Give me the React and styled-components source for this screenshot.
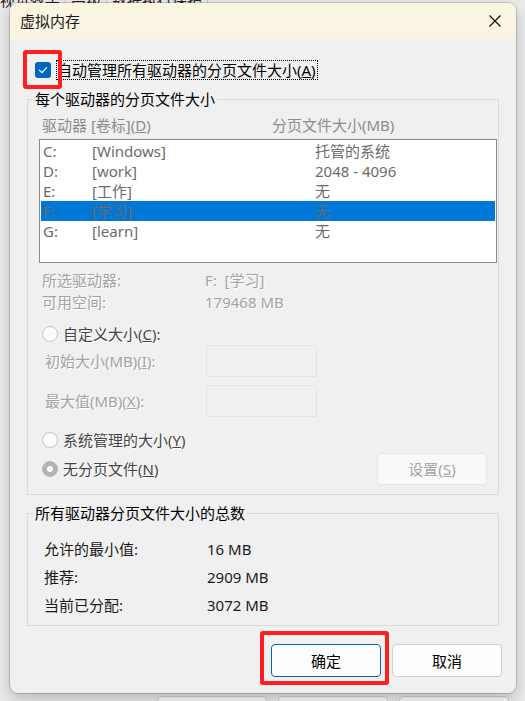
import React from "react";
import styled, { createGlobalStyle } from "styled-components";

const GlobalStyle = createGlobalStyle`
  html, body {
    margin: 0;
    padding: 0;
  }
  body {
    width: 525px;
    height: 701px;
    overflow: hidden;
    background: #ebebeb;
    font-family: "Noto Sans", "Noto Sans CJK SC", sans-serif;
    font-size: 15px;
    color: #000;
  }
`;

const Backdrop = styled.div`
  position: relative;
  width: 525px;
  height: 701px;
  overflow: hidden;
  display: flex;
  flex-direction: column;
  justify-content: space-between;
`;

const BackTabs = styled.div`
  display: flex;
  align-items: flex-end;
  height: 10px;
  margin-left: -5px;
  overflow: hidden;
  color: #222;
`;

const BackTab = styled.div`
  line-height: 20px;
  padding: 0 5px;
  border-right: 1px solid #c9c9c9;
`;

const BackFooter = styled.div`
  display: flex;
  justify-content: flex-end;
  align-items: flex-start;
  gap: 11px;
  height: 5px;
  padding-right: 16px;
  overflow: hidden;
`;

const BackButton = styled.div`
  width: 110px;
  height: 32px;
  box-sizing: border-box;
  border: 1px solid #cdcdcd;
  border-radius: 4px;
  background: #fbfbfb;
`;

const Dialog = styled.div`
  position: absolute;
  left: 10px;
  top: 3px;
  width: 506px;
  height: 690px;
  background: #f0f0f0;
  border-radius: 8px;
  box-shadow: 0 0 0 1px rgba(0, 0, 0, 0.16), 0 6px 16px rgba(0, 0, 0, 0.22);
  overflow: hidden;
  display: flex;
  flex-direction: column;
`;

const TitleBar = styled.div`
  height: 36px;
  flex-shrink: 0;
  background: #faf4e2;
  display: flex;
  align-items: center;
  justify-content: space-between;
  padding: 0 15px 0 10px;
  line-height: 20px;
  color: #1a1a1a;
`;

const Body = styled.div`
  padding: 21px 17px 0;
  display: flex;
  flex-direction: column;
`;

const CheckRow = styled.div`
  display: flex;
  align-items: center;
  gap: 5px;
  height: 20px;
  padding-left: 8px;
`;

const CheckBox = styled.span`
  position: relative;
  width: 16px;
  height: 16px;
  border-radius: 3px;
  background: #0067c0;
  display: flex;
  align-items: center;
  justify-content: center;
`;

const Highlight = styled.span`
  position: absolute;
  top: ${(p) => p.$t}px;
  left: ${(p) => p.$l}px;
  right: ${(p) => p.$r}px;
  bottom: ${(p) => p.$b}px;
  border: 4px solid #ff1f1f;
  border-radius: 3px;
  pointer-events: none;
`;

const FocusLabel = styled.span`
  box-sizing: border-box;
  height: 20px;
  line-height: 18px;
  border: 1px dotted #000;
  padding-right: 1px;
`;

const Group = styled.fieldset`
  margin: ${(p) => p.$top}px 0 0;
  padding: 0;
  border: 1px solid #dadada;
  min-width: 0;
`;

const GroupContent = styled.div`
  display: flex;
  flex-direction: column;
  padding: ${(p) => p.$pad};
`;

const Legend = styled.legend`
  margin-left: 5px;
  padding: 0 2px;
  line-height: 20px;
  color: #000;
`;

const ColumnHeader = styled.div`
  margin-top: 6px;
  display: grid;
  grid-template-columns: 230px 1fr;
  padding-left: 3px;
  line-height: 20px;
  color: #8c8c8c;
`;

const List = styled.div`
  margin-top: 4px;
  height: 124px;
  box-sizing: border-box;
  border: 1px solid #8b8b8b;
  background: #fff;
  padding: 1px;
`;

const ListRow = styled.div`
  display: grid;
  grid-template-columns: 49px 223px 1fr;
  padding-left: 2px;
  line-height: 20px;
  height: 20px;
  color: #6b6b6b;
  background: ${(p) => (p.$selected ? "#0078d7" : "transparent")};
`;

const Info = styled.div`
  margin-top: 6px;
`;

const InfoRow = styled.div`
  display: grid;
  grid-template-columns: 163px 1fr;
  padding-left: 3px;
  line-height: 22px;
  height: 22px;
`;

const Dim = styled.span`
  color: #a3a3a3;
  text-shadow: 1px 1px 0 #ffffff;
`;

const RadioRow = styled.div`
  margin-top: ${(p) => p.$top}px;
  display: flex;
  align-items: center;
  justify-content: space-between;
  height: ${(p) => (p.$tall ? 32 : 20)}px;
  padding: 0 10px 0 3px;
`;

const RadioLabel = styled.label`
  display: flex;
  align-items: center;
  gap: 5px;
  line-height: 20px;
  color: #454545;
  text-shadow: 1px 1px 0 #ffffff;
`;

const Radio = styled.span`
  width: 16px;
  height: 16px;
  box-sizing: border-box;
  border-radius: 50%;
  border: 1px solid ${(p) => (p.$checked ? "#b3b3b3" : "#c4c4c4")};
  background: ${(p) => (p.$checked ? "#b3b3b3" : "#fbfbfb")};
  display: flex;
  align-items: center;
  justify-content: center;
  &::after {
    content: "";
    display: ${(p) => (p.$checked ? "block" : "none")};
    width: 6px;
    height: 6px;
    border-radius: 50%;
    background: #fff;
  }
`;

const InputRow = styled.div`
  margin-top: ${(p) => p.$top}px;
  display: grid;
  grid-template-columns: 161px 111px;
  align-items: center;
  height: 32px;
  padding-left: 6px;
  line-height: 20px;
`;

const SizeInput = styled.div`
  height: 32px;
  box-sizing: border-box;
  border: 1px solid #e3e3e3;
  background: #f0f0f0;
`;

const SetButton = styled.div`
  width: 110px;
  height: 32px;
  box-sizing: border-box;
  border: 1px solid #e6e6e6;
  border-radius: 4px;
  background: #f9f9f9;
  display: flex;
  align-items: center;
  justify-content: center;
  line-height: 20px;
`;

const TotalRow = styled.div`
  display: grid;
  grid-template-columns: 163px 1fr;
  height: 28px;
  line-height: 28px;
  color: #1a1a1a;
`;

const Footer = styled.div`
  margin-top: 18px;
  display: flex;
  justify-content: flex-end;
  gap: 11px;
  padding-right: 14px;
`;

const DialogButton = styled.div`
  position: relative;
  width: 110px;
  height: 33px;
  box-sizing: border-box;
  border: 1px solid ${(p) => (p.$primary ? "#0067c0" : "#d0d0d0")};
  border-radius: 4px;
  background: #fdfdfd;
  display: flex;
  align-items: center;
  justify-content: center;
  line-height: 20px;
  color: #000;
`;

const drives = [
  { letter: "C:", label: "[Windows]", size: "托管的系统" },
  { letter: "D:", label: "[work]", size: "2048 - 4096" },
  { letter: "E:", label: "[工作]", size: "无" },
  { letter: "F:", label: "[学习]", size: "无", selected: true },
  { letter: "G:", label: "[learn]", size: "无" },
];

const totals = [
  ["允许的最小值:", "16 MB"],
  ["推荐:", "2909 MB"],
  ["当前已分配:", "3072 MB"],
];

function CloseIcon() {
  return (
    <svg width="12" height="12" viewBox="0 0 12 12">
      <path d="M0.5 0.5 L11.5 11.5 M11.5 0.5 L0.5 11.5" stroke="#111" strokeWidth="1.2" fill="none" />
    </svg>
  );
}

function CheckIcon() {
  return (
    <svg width="10" height="10" viewBox="0 0 10 10">
      <path d="M1.5 5.2 L4 7.6 L8.6 2.6" stroke="#fff" strokeWidth="1.3" fill="none" strokeLinecap="round" strokeLinejoin="round" />
    </svg>
  );
}

export default function App() {
  return (
    <>
      <GlobalStyle />
      <Backdrop>
        <BackTabs>
          <BackTab>视觉效果</BackTab>
          <BackTab>高级</BackTab>
          <BackTab>数据执行保护</BackTab>
        </BackTabs>
        <BackFooter>
          <BackButton />
          <BackButton />
          <BackButton />
        </BackFooter>

        <Dialog>
          <TitleBar>
            <span>虚拟内存</span>
            <CloseIcon />
          </TitleBar>

          <Body>
            <CheckRow>
              <CheckBox>
                <CheckIcon />
                <Highlight $t={-12} $l={-12} $r={-11} $b={-11} />
              </CheckBox>
              <FocusLabel>
                自动管理所有驱动器的分页文件大小(<u>A</u>)
              </FocusLabel>
            </CheckRow>

            <Group $top={9}>
              <Legend>每个驱动器的分页文件大小</Legend>
              <GroupContent $pad="0 1px 9px 11px">
                <ColumnHeader>
                  <span>
                    驱动器 [卷标](<u>D</u>)
                  </span>
                  <span>分页文件大小(MB)</span>
                </ColumnHeader>
                <List>
                  {drives.map((d) => (
                    <ListRow key={d.letter} $selected={d.selected}>
                      <span>{d.letter}</span>
                      <span>{d.label}</span>
                      <span>{d.size}</span>
                    </ListRow>
                  ))}
                </List>

                <Info>
                  <InfoRow>
                    <Dim>所选驱动器:</Dim>
                    <Dim>F:&nbsp;&nbsp;[学习]</Dim>
                  </InfoRow>
                  <InfoRow>
                    <Dim>可用空间:</Dim>
                    <Dim>179468 MB</Dim>
                  </InfoRow>
                </Info>

                <RadioRow $top={11}>
                  <RadioLabel>
                    <Radio />
                    <span>
                      自定义大小(<u>C</u>):
                    </span>
                  </RadioLabel>
                </RadioRow>
                <InputRow $top={1}>
                  <Dim>
                    初始大小(MB)(<u>I</u>):
                  </Dim>
                  <SizeInput />
                </InputRow>
                <InputRow $top={8}>
                  <Dim>
                    最大值(MB)(<u>X</u>):
                  </Dim>
                  <SizeInput />
                </InputRow>
                <RadioRow $top={13}>
                  <RadioLabel>
                    <Radio />
                    <span>
                      系统管理的大小(<u>Y</u>)
                    </span>
                  </RadioLabel>
                </RadioRow>
                <RadioRow $top={3} $tall>
                  <RadioLabel>
                    <Radio $checked />
                    <span>
                      无分页文件(<u>N</u>)
                    </span>
                  </RadioLabel>
                  <SetButton>
                    <Dim>
                      设置(<u>S</u>)
                    </Dim>
                  </SetButton>
                </RadioRow>
              </GroupContent>
            </Group>

            <Group $top={8}>
              <Legend>所有驱动器分页文件大小的总数</Legend>
              <GroupContent $pad="12px 1px 6px 16px">
                {totals.map(([label, value]) => (
                  <TotalRow key={label}>
                    <span>{label}</span>
                    <span>{value}</span>
                  </TotalRow>
                ))}
              </GroupContent>
            </Group>
          </Body>

          <Footer>
            <DialogButton $primary>
              确定
              <Highlight $t={-14} $l={-12} $r={-9} $b={-9} />
            </DialogButton>
            <DialogButton>取消</DialogButton>
          </Footer>
        </Dialog>
      </Backdrop>
    </>
  );
}
